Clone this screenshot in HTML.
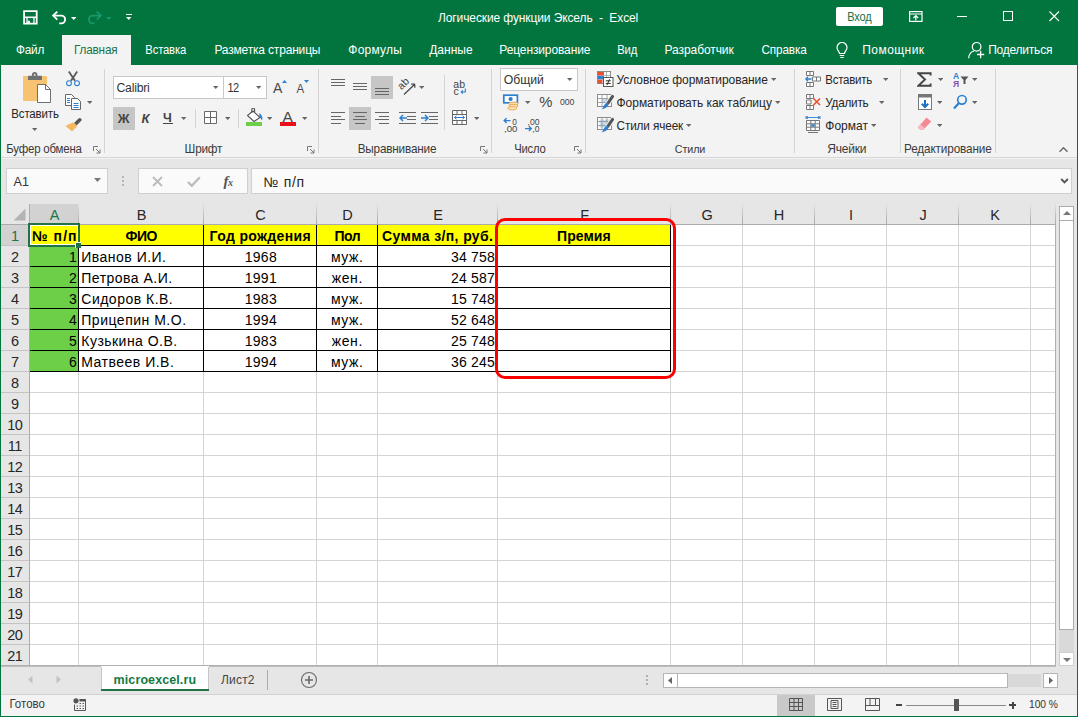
<!DOCTYPE html>
<html><head><meta charset="utf-8">
<style>
*{box-sizing:border-box;margin:0;padding:0}
html,body{width:1078px;height:717px;overflow:hidden;background:#f3f3f3}
body{font-family:"Liberation Sans",sans-serif;font-size:12px;color:#262626;position:relative}
.abs{position:absolute}
.t{position:absolute;white-space:pre;line-height:1}
#title{left:0;top:0;width:1078px;height:65px;background:#02753f}
#ribbon{left:1px;top:65px;width:1076px;height:93px;background:#f3f3f3;border-bottom:1px solid #d6d6d6}
.tab{position:absolute;top:43px;color:#fff;font-size:12.5px;white-space:nowrap;line-height:1}
.gl{position:absolute;top:149px;font-size:11.5px;color:#3b3b3b;white-space:nowrap;line-height:1;transform:translateX(-50%);top:144px}
.sep{position:absolute;top:70px;width:1px;height:84px;background:#d9d9d9}
.rt{position:absolute;font-size:12.5px;color:#262626;white-space:nowrap;line-height:1}
.dd{position:absolute;width:0;height:0;border-left:3px solid transparent;border-right:3px solid transparent;border-top:3px solid #555}
#fbar{left:1px;top:159px;width:1076px;height:45px;background:#e6e6e6}
.box{position:absolute;background:#fff;border:1px solid #dadada}
#grid{left:1px;top:204px;width:1055px;height:462px;background:#fff}
.ch{position:absolute;top:204px;height:20px;background:#e6e6e6;font-size:14.5px;color:#262626;text-align:center;line-height:21px}
.rh{position:absolute;left:1px;width:28px;height:21px;background:#e6e6e6;font-size:14.5px;color:#262626;text-align:center;line-height:22px;border-bottom:1px solid #c9c9c9}
.vl{position:absolute;width:1px;background:#d8d8d8}
.hl{position:absolute;height:1px;background:#d8d8d8}
.c{position:absolute;height:21px;font-size:14.5px;line-height:22px;color:#000;white-space:nowrap;overflow:hidden}
.b{font-weight:bold}
</style></head><body>
<div class="abs" id="title"></div>
<div class="abs" id="ribbon"></div>
<div class="abs" id="fbar"></div>
<div class="abs" id="grid"></div>
<svg class="abs" style="left:22.5px;top:10px" width="15" height="15" viewBox="0 0 15 15"><path d="M1.1 1.1H13.7V13.7H1.1Z" fill="none" stroke="#fff" stroke-width="1.8"/><path d="M1 7.3H13.8" stroke="#fff" stroke-width="1.6"/><path d="M4 13.7V7.3M11 13.7V7.3" stroke="#fff" stroke-width="1.3"/><rect x="4.6" y="10.7" width="2.3" height="3" fill="#fff"/></svg>
<svg class="abs" style="left:51px;top:9px" width="18" height="17" viewBox="0 0 18 17"><path d="M2.2 6.6H10.2A3.9 3.9 0 0 1 10.2 14.4H8.2" fill="none" stroke="#fff" stroke-width="1.9"/><path d="M6.3 2.6L2.2 6.6L6.3 10.6" fill="none" stroke="#fff" stroke-width="1.9"/></svg>
<svg class="abs" style="left:70.80px;top:16.50px" width="5.4" height="3"><path d="M0 0H5.4L2.7 3Z" fill="#fff"/></svg>
<svg class="abs" style="left:85px;top:9px" width="18" height="17" viewBox="0 0 18 17"><path d="M15.8 6.6H7.8A3.9 3.9 0 0 0 7.8 14.4H9.8" fill="none" stroke="#17976a" stroke-width="1.9"/><path d="M11.7 2.6L15.8 6.6L11.7 10.6" fill="none" stroke="#17976a" stroke-width="1.9"/></svg>
<svg class="abs" style="left:105.80px;top:16.50px" width="5.4" height="3"><path d="M0 0H5.4L2.7 3Z" fill="#17976a"/></svg>
<div class="abs" style="left:126px;top:14px;width:6px;height:1px;background:#fff;"></div>
<svg class="abs" style="left:126.30px;top:17.00px" width="5.4" height="3"><path d="M0 0H5.4L2.7 3Z" fill="#fff"/></svg>
<div class="t" style="left:438.00px;top:7.50px;height:20px;line-height:20px;font-size:12px;color:#fff;letter-spacing:-0.109px;transform:scaleY(1.08);">Логические функции Эксель  -  Excel</div>
<div class="abs" style="left:836px;top:7px;width:47px;height:19px;background:#fff;border-radius:2px"></div>
<div class="t" style="left:847.30px;top:6.50px;height:20px;line-height:20px;font-size:11.0px;color:#217346;letter-spacing:-0.167px;transform:scaleY(1.08);">Вход</div>
<svg class="abs" style="left:909px;top:10.5px" width="14" height="11" viewBox="0 0 14 11"><rect x="0.6" y="0.6" width="12.4" height="9.8" fill="none" stroke="#fff" stroke-width="1.2"/><path d="M0.6 3H13" stroke="#fff" stroke-width="1"/><path d="M6.8 9.4V5M4.4 7L6.8 4.6L9.2 7" fill="none" stroke="#fff" stroke-width="1.2"/></svg>
<div class="abs" style="left:957px;top:16px;width:10px;height:1px;background:#fff;"></div>
<div class="abs" style="left:1003px;top:11px;width:10px;height:10px;background:transparent;border:1px solid #fff"></div>
<svg class="abs" style="left:1049px;top:11px" width="11" height="11" viewBox="0 0 11 11"><path d="M0.5 0.5L10 10M10 0.5L0.5 10" stroke="#fff" stroke-width="1.1"/></svg>

<div class="abs" style="left:62px;top:35px;width:69px;height:31px;background:#f3f3f3;"></div>
<div class="t" style="left:16.00px;top:40.00px;height:20px;line-height:20px;font-size:11.75px;color:#fff;letter-spacing:-0.200px;transform:scaleY(1.08);">Файл</div>
<div class="t" style="left:74.10px;top:40.00px;height:20px;line-height:20px;font-size:11.75px;color:#217346;letter-spacing:-0.208px;transform:scaleY(1.08);">Главная</div>
<div class="t" style="left:145.30px;top:40.00px;height:20px;line-height:20px;font-size:11.25px;color:#fff;letter-spacing:-0.150px;transform:scaleY(1.08);">Вставка</div>
<div class="t" style="left:214.40px;top:40.00px;height:20px;line-height:20px;font-size:12px;color:#fff;letter-spacing:-0.175px;transform:scaleY(1.08);">Разметка страницы</div>
<div class="t" style="left:348.30px;top:40.00px;height:20px;line-height:20px;font-size:12px;color:#fff;letter-spacing:0.208px;transform:scaleY(1.08);">Формулы</div>
<div class="t" style="left:429.20px;top:40.00px;height:20px;line-height:20px;font-size:12px;color:#fff;letter-spacing:0.030px;transform:scaleY(1.08);">Данные</div>
<div class="t" style="left:499.30px;top:40.00px;height:20px;line-height:20px;font-size:12px;color:#fff;letter-spacing:-0.119px;transform:scaleY(1.08);">Рецензирование</div>
<div class="t" style="left:617.20px;top:40.00px;height:20px;line-height:20px;font-size:11.25px;color:#fff;letter-spacing:-0.075px;transform:scaleY(1.08);">Вид</div>
<div class="t" style="left:664.60px;top:40.00px;height:20px;line-height:20px;font-size:12px;color:#fff;letter-spacing:-0.085px;transform:scaleY(1.08);">Разработчик</div>
<div class="t" style="left:761.40px;top:40.00px;height:20px;line-height:20px;font-size:11.75px;color:#fff;letter-spacing:-0.125px;transform:scaleY(1.08);">Справка</div>
<div class="t" style="left:862.30px;top:40.00px;height:20px;line-height:20px;font-size:12px;color:#fff;letter-spacing:0.443px;transform:scaleY(1.08);">Помощник</div>
<div class="t" style="left:988.20px;top:40.00px;height:20px;line-height:20px;font-size:12px;color:#fff;letter-spacing:-0.228px;transform:scaleY(1.08);">Поделиться</div>
<svg class="abs" style="left:835px;top:42px" width="14" height="17" viewBox="0 0 14 17"><path d="M4.5 11.5C4.5 9.5 2 8.5 2 5.5A5 5 0 0 1 12 5.5C12 8.5 9.5 9.5 9.5 11.5Z" fill="none" stroke="#fff" stroke-width="1.2"/><path d="M4.8 13.5H9.2M5.3 15.5H8.7" stroke="#fff" stroke-width="1.1"/></svg>
<svg class="abs" style="left:967px;top:41px" width="19" height="18" viewBox="0 0 19 18"><circle cx="9.6" cy="5.8" r="4.3" fill="none" stroke="#fff" stroke-width="1.2"/><path d="M1.6 17.2C2 12.8 4.4 10.6 7 10" fill="none" stroke="#fff" stroke-width="1.2"/><path d="M13.6 9.8V17.2M10 13.5H17.2" stroke="#fff" stroke-width="1.3"/></svg>

<svg class="abs" style="left:22px;top:71px" width="31" height="33" viewBox="0 0 31 33"><rect x="1" y="5" width="24" height="25" rx="1" fill="#f8c370"/><path d="M6 9V5.6A0.8 0.8 0 0 1 6.8 4.8H10V3.6A2.6 2.6 0 0 1 15.4 3.6V4.8H19.2A0.8 0.8 0 0 1 20 5.6V9Z" fill="#707070"/><circle cx="12.7" cy="3.9" r="0.9" fill="#f3f3f3"/><path d="M15.5 13.5H23.5L28.5 18.5V31.5H15.5Z" fill="#fff" stroke="#707070" stroke-width="1"/><path d="M23.5 13.5V18.5H28.5" fill="none" stroke="#707070" stroke-width="1"/></svg>
<div class="t" style="left:11.30px;top:104.00px;height:20px;line-height:20px;font-size:11.5px;color:#262626;letter-spacing:-0.164px;transform:scaleY(1.08);">Вставить</div>
<svg class="abs" style="left:32.30px;top:127.50px" width="5.4" height="3"><path d="M0 0H5.4L2.7 3Z" fill="#666"/></svg>
<svg class="abs" style="left:65px;top:71px" width="16" height="16" viewBox="0 0 16 16"><path d="M3.8 0.5L10 9.8M12.2 0.5L6 9.8" stroke="#585858" stroke-width="1.8" fill="none"/><circle cx="4" cy="12.2" r="2.4" fill="none" stroke="#2f7fcf" stroke-width="1.1"/><circle cx="12" cy="12.2" r="2.4" fill="none" stroke="#2f7fcf" stroke-width="1.1"/></svg>
<svg class="abs" style="left:65px;top:94px" width="17" height="16" viewBox="0 0 17 16"><path d="M0.5 0.5H6.5L9.5 3.5V11.5H0.5Z" fill="#fff" stroke="#666" stroke-width="1"/><path d="M6.5 4.5H12.5L15.5 7.5V15.5H6.5Z" fill="#fff" stroke="#666" stroke-width="1"/><path d="M2 4.5H5M2 6.5H5M2 8.5H5M8.5 9.5H13.5M8.5 11.5H13.5M8.5 13.5H13.5" stroke="#2f7fcf" stroke-width="1"/></svg>
<svg class="abs" style="left:86.70px;top:100.50px" width="5.4" height="3"><path d="M0 0H5.4L2.7 3Z" fill="#666"/></svg>
<svg class="abs" style="left:65px;top:117px" width="17" height="15" viewBox="0 0 17 15"><path d="M9 6L13.5 1.5A1.6 1.6 0 0 1 16 4L11.5 8.5Z" fill="#555"/><path d="M8.2 5.2L12.3 9.3L7 14.5L0.5 9Z" fill="#f4b860"/></svg>
<div class="t" style="left:6.30px;top:139.00px;height:20px;line-height:20px;font-size:11.5px;color:#3a3a3a;letter-spacing:-0.223px;transform:scaleY(1.08);">Буфер обмена</div>
<svg class="abs" style="left:93px;top:146px" width="8" height="8" viewBox="0 0 8 8"><path d="M0.5 5V0.5H5" fill="none" stroke="#777" stroke-width="1"/><path d="M3 3L7 7M7 3.5V7H3.5" fill="none" stroke="#777" stroke-width="1"/></svg>
<div class="abs" style="left:104px;top:69px;width:1px;height:84px;background:#d4d4d4;"></div>
<div class="abs" style="left:113px;top:76px;width:111px;height:23px;background:#fff;border:1px solid #c8c8c8"></div>
<div class="abs" style="left:224px;top:76px;width:43px;height:23px;background:#fff;border:1px solid #c8c8c8;border-left:0"></div>
<div class="t" style="left:116.50px;top:77.50px;height:20px;line-height:20px;font-size:12.25px;color:#333;letter-spacing:-0.242px;transform:scaleY(1.08);">Calibri</div>
<svg class="abs" style="left:213.30px;top:86.00px" width="5.4" height="3"><path d="M0 0H5.4L2.7 3Z" fill="#666"/></svg>
<div class="t" style="left:227.40px;top:77.50px;height:20px;line-height:20px;font-size:11.0px;color:#333;letter-spacing:-0.600px;transform:scaleY(1.08);">12</div>
<svg class="abs" style="left:256.30px;top:86.00px" width="5.4" height="3"><path d="M0 0H5.4L2.7 3Z" fill="#666"/></svg>
<div class="t" style="left:273.00px;top:78.00px;height:20px;line-height:20px;font-size:14px;color:#4a4a4a;letter-spacing:0.000px;">A</div>
<svg class="abs" style="left:282px;top:80px" width="5" height="3" viewBox="0 0 5 3"><path d="M0 3L2.5 0L5 3Z" fill="#2f7fcf"/></svg>
<div class="t" style="left:296.40px;top:79.00px;height:20px;line-height:20px;font-size:11.5px;color:#4a4a4a;letter-spacing:-0.150px;transform:scaleY(1.08);">A</div>
<svg class="abs" style="left:303.5px;top:80px" width="5" height="3" viewBox="0 0 5 3"><path d="M0 0L2.5 3L5 0Z" fill="#2f7fcf"/></svg>
<div class="abs" style="left:113px;top:107px;width:22px;height:23px;background:#c6c6c6;"></div>
<div class="t" style="left:117.75px;top:108.50px;height:20px;line-height:20px;font-size:13px;color:#444;letter-spacing:0.750px;font-weight:bold;">Ж</div>
<div class="t" style="left:141.50px;top:108.50px;height:20px;line-height:20px;font-size:13px;color:#444;letter-spacing:-0.250px;font-weight:bold;font-style:italic;">К</div>
<div class="t" style="left:163.00px;top:107.50px;height:20px;line-height:20px;font-size:12.5px;color:#444;letter-spacing:0.750px;font-weight:bold;transform:scaleY(1.08);">Ч</div>
<div class="abs" style="left:163px;top:123px;width:10px;height:1px;background:#444;"></div>
<svg class="abs" style="left:181.30px;top:117.00px" width="5.4" height="3"><path d="M0 0H5.4L2.7 3Z" fill="#666"/></svg>
<div class="abs" style="left:195px;top:109px;width:1px;height:19px;background:#d4d4d4;"></div>
<svg class="abs" style="left:204px;top:111px" width="13" height="13" viewBox="0 0 13 13"><path d="M0.5 0.5H12.5V12.5H0.5ZM6.5 0.5V12.5M0.5 6.5H12.5" fill="#fff" stroke="#6a6a6a" stroke-width="1"/></svg>
<svg class="abs" style="left:224.70px;top:117.00px" width="5.4" height="3"><path d="M0 0H5.4L2.7 3Z" fill="#666"/></svg>
<div class="abs" style="left:238px;top:109px;width:1px;height:19px;background:#d4d4d4;"></div>
<svg class="abs" style="left:246px;top:108px" width="18" height="15" viewBox="0 0 18 15"><path d="M7 3L14 9.5L8 13.5L1.5 7.5Z" fill="#fff" stroke="#555" stroke-width="1.1"/><path d="M5.8 5V1.6A1.4 1.4 0 0 1 8.6 1.6V4.5" fill="none" stroke="#555" stroke-width="1.1"/><path d="M13.2 5C16 7 17.2 9.5 16 12.5C14.8 10.5 14.2 9.8 13.6 9.5Z" fill="#2f7fcf"/></svg>
<div class="abs" style="left:246px;top:122px;width:16px;height:4px;background:#6dce48;"></div>
<svg class="abs" style="left:267.30px;top:117.00px" width="5.4" height="3"><path d="M0 0H5.4L2.7 3Z" fill="#666"/></svg>
<div class="t" style="left:282.60px;top:106.50px;height:20px;line-height:20px;font-size:15.5px;color:#4a4a4a;letter-spacing:1.200px;">A</div>
<div class="abs" style="left:280px;top:122px;width:16px;height:4px;background:#e8111a;"></div>
<svg class="abs" style="left:301.70px;top:117.00px" width="5.4" height="3"><path d="M0 0H5.4L2.7 3Z" fill="#666"/></svg>
<div class="t" style="left:184.60px;top:139.00px;height:20px;line-height:20px;font-size:11.75px;color:#3a3a3a;letter-spacing:-0.237px;transform:scaleY(1.08);">Шрифт</div>
<svg class="abs" style="left:307px;top:146px" width="8" height="8" viewBox="0 0 8 8"><path d="M0.5 5V0.5H5" fill="none" stroke="#777" stroke-width="1"/><path d="M3 3L7 7M7 3.5V7H3.5" fill="none" stroke="#777" stroke-width="1"/></svg>
<div class="abs" style="left:318px;top:69px;width:1px;height:84px;background:#d4d4d4;"></div>
<div class="abs" style="left:331px;top:79px;width:14px;height:1px;background:#666;"></div>
<div class="abs" style="left:331px;top:82px;width:14px;height:1px;background:#666;"></div>
<div class="abs" style="left:331px;top:85px;width:14px;height:1px;background:#666;"></div>
<div class="abs" style="left:353px;top:83px;width:14px;height:1px;background:#666;"></div>
<div class="abs" style="left:353px;top:86px;width:14px;height:1px;background:#666;"></div>
<div class="abs" style="left:353px;top:89px;width:14px;height:1px;background:#666;"></div>
<div class="abs" style="left:371px;top:76px;width:22px;height:23px;background:#c6c6c6;"></div>
<div class="abs" style="left:375px;top:88px;width:14px;height:1px;background:#666;"></div>
<div class="abs" style="left:375px;top:91px;width:14px;height:1px;background:#666;"></div>
<div class="abs" style="left:375px;top:94px;width:14px;height:1px;background:#666;"></div>
<svg class="abs" style="left:397px;top:76px" width="20" height="20" viewBox="0 0 20 20"><text x="0" y="0" font-family="Liberation Sans" font-size="10.5" fill="#444" transform="translate(4.6 14.2) rotate(-45)">ab</text><path d="M7 18.5L17.5 8.5M17.8 8.2H14.2M17.8 8.2V11.8" fill="none" stroke="#444" stroke-width="1.2"/></svg>
<svg class="abs" style="left:418.90px;top:86.00px" width="5.4" height="3"><path d="M0 0H5.4L2.7 3Z" fill="#666"/></svg>
<div class="abs" style="left:444px;top:75px;width:1px;height:55px;background:#d4d4d4;"></div>
<svg class="abs" style="left:453px;top:78px" width="16" height="18" viewBox="0 0 16 18"><text x="0.3" y="9.6" font-family="Liberation Sans" font-size="10.5" fill="#444">ab</text><text x="0.6" y="17" font-family="Liberation Sans" font-size="10.5" fill="#444">c</text><path d="M12.3 10.5V14H8.3M9.8 12.4L8.2 14L9.8 15.6" fill="none" stroke="#2f7fcf" stroke-width="1.1"/></svg>
<div class="abs" style="left:331px;top:112.0px;width:14px;height:1px;background:#666;"></div>
<div class="abs" style="left:331px;top:115.5px;width:10px;height:1px;background:#666;"></div>
<div class="abs" style="left:331px;top:119.0px;width:14px;height:1px;background:#666;"></div>
<div class="abs" style="left:331px;top:122.5px;width:10px;height:1px;background:#666;"></div>
<div class="abs" style="left:349px;top:107px;width:22px;height:23px;background:#c6c6c6;"></div>
<div class="abs" style="left:353.0px;top:112.0px;width:14px;height:1px;background:#666;"></div>
<div class="abs" style="left:355.0px;top:115.5px;width:10px;height:1px;background:#666;"></div>
<div class="abs" style="left:353.0px;top:119.0px;width:14px;height:1px;background:#666;"></div>
<div class="abs" style="left:355.0px;top:122.5px;width:10px;height:1px;background:#666;"></div>
<div class="abs" style="left:375px;top:112.0px;width:14px;height:1px;background:#666;"></div>
<div class="abs" style="left:379px;top:115.5px;width:10px;height:1px;background:#666;"></div>
<div class="abs" style="left:375px;top:119.0px;width:14px;height:1px;background:#666;"></div>
<div class="abs" style="left:379px;top:122.5px;width:10px;height:1px;background:#666;"></div>
<div class="abs" style="left:399px;top:112px;width:17px;height:1px;background:#666;"></div>
<div class="abs" style="left:399px;top:122.5px;width:17px;height:1px;background:#666;"></div>
<div class="abs" style="left:407px;top:115.5px;width:9px;height:1px;background:#666;"></div>
<div class="abs" style="left:407px;top:119.0px;width:9px;height:1px;background:#666;"></div>
<svg class="abs" style="left:399px;top:114px" width="8" height="8" viewBox="0 0 8 8"><path d="M8 4H1M4 1L1 4L4 7" fill="none" stroke="#2f7fcf" stroke-width="1.5"/></svg>
<div class="abs" style="left:421px;top:112px;width:17px;height:1px;background:#666;"></div>
<div class="abs" style="left:421px;top:122.5px;width:17px;height:1px;background:#666;"></div>
<div class="abs" style="left:429px;top:115.5px;width:9px;height:1px;background:#666;"></div>
<div class="abs" style="left:429px;top:119.0px;width:9px;height:1px;background:#666;"></div>
<svg class="abs" style="left:421px;top:114px" width="8" height="8" viewBox="0 0 8 8"><path d="M0 4H7M4 1L7 4L4 7" fill="none" stroke="#2f7fcf" stroke-width="1.5"/></svg>
<svg class="abs" style="left:452px;top:110px" width="15" height="15" viewBox="0 0 15 15"><path d="M0.5 0.5H14.5V14.5H0.5Z" fill="#fff" stroke="#666" stroke-width="1"/><path d="M0.5 4.5H14.5M0.5 10.5H14.5M5 0.5V4.5M10 0.5V4.5M5 10.5V14.5M10 10.5V14.5" stroke="#666" stroke-width="1" fill="none"/><path d="M2.5 7.5H12.5M4.5 5.8L2.5 7.5L4.5 9.2M10.5 5.8L12.5 7.5L10.5 9.2" stroke="#2f7fcf" stroke-width="1" fill="none"/></svg>
<svg class="abs" style="left:474.00px;top:117.00px" width="5.4" height="3"><path d="M0 0H5.4L2.7 3Z" fill="#666"/></svg>
<div class="t" style="left:357.70px;top:139.00px;height:20px;line-height:20px;font-size:11.75px;color:#3a3a3a;letter-spacing:-0.191px;transform:scaleY(1.08);">Выравнивание</div>
<svg class="abs" style="left:480px;top:146px" width="8" height="8" viewBox="0 0 8 8"><path d="M0.5 5V0.5H5" fill="none" stroke="#777" stroke-width="1"/><path d="M3 3L7 7M7 3.5V7H3.5" fill="none" stroke="#777" stroke-width="1"/></svg>
<div class="abs" style="left:491px;top:69px;width:1px;height:84px;background:#d4d4d4;"></div>
<div class="abs" style="left:500px;top:68px;width:78px;height:23px;background:#fff;border:1px solid #c8c8c8"></div>
<div class="t" style="left:503.80px;top:69.50px;height:20px;line-height:20px;font-size:12.25px;color:#333;letter-spacing:-0.038px;transform:scaleY(1.08);">Общий</div>
<svg class="abs" style="left:567.30px;top:78.00px" width="5.4" height="3"><path d="M0 0H5.4L2.7 3Z" fill="#666"/></svg>
<svg class="abs" style="left:502px;top:93px" width="18" height="18" viewBox="0 0 18 18"><rect x="1.8" y="2.2" width="13.6" height="7.6" fill="#fff" stroke="#2f7fcf" stroke-width="1.7"/><circle cx="8.6" cy="6" r="2.1" fill="#2f7fcf"/><ellipse cx="11.5" cy="10.8" rx="4.6" ry="1.7" fill="#fbe3bd" stroke="#f2aa4c" stroke-width="1"/><ellipse cx="11.5" cy="13" rx="4.6" ry="1.7" fill="#fbe3bd" stroke="#f2aa4c" stroke-width="1"/><ellipse cx="10.2" cy="15.2" rx="4.6" ry="1.7" fill="#fbe3bd" stroke="#f2aa4c" stroke-width="1"/></svg>
<svg class="abs" style="left:524.90px;top:100.50px" width="5.4" height="3"><path d="M0 0H5.4L2.7 3Z" fill="#666"/></svg>
<div class="t" style="left:539.20px;top:92.00px;height:20px;line-height:20px;font-size:14.75px;color:#444;letter-spacing:-0.200px;">%</div>
<div class="t" style="left:560.00px;top:91.50px;height:20px;line-height:20px;font-size:8.75px;color:#444;letter-spacing:-0.150px;transform:scaleY(1.08);">000</div>
<svg class="abs" style="left:503px;top:117px" width="16" height="16" viewBox="0 0 16 16"><path d="M7.5 3.6H1.2M3.6 1.2L1.2 3.6L3.6 6" fill="none" stroke="#2f7fcf" stroke-width="1.4"/><text x="9.3" y="7.6" textLength="4.6" font-family="Liberation Sans" font-size="9.6" fill="#444" lengthAdjust="spacingAndGlyphs">0</text><text x="1" y="15" textLength="13.4" font-family="Liberation Sans" font-size="9.6" fill="#444" lengthAdjust="spacingAndGlyphs">,00</text></svg>
<svg class="abs" style="left:524px;top:117px" width="16" height="16" viewBox="0 0 16 16"><text x="3.5" y="7.6" textLength="12" font-family="Liberation Sans" font-size="9.6" fill="#444" lengthAdjust="spacingAndGlyphs">,00</text><path d="M1 11.6H7.3M4.9 9.2L7.3 11.6L4.9 14" fill="none" stroke="#2f7fcf" stroke-width="1.4"/><text x="8.3" y="15" textLength="7.2" font-family="Liberation Sans" font-size="9.6" fill="#444" lengthAdjust="spacingAndGlyphs">,0</text></svg>
<div class="t" style="left:514.30px;top:139.00px;height:20px;line-height:20px;font-size:11.25px;color:#3a3a3a;letter-spacing:-0.237px;transform:scaleY(1.08);">Число</div>
<svg class="abs" style="left:574px;top:146px" width="8" height="8" viewBox="0 0 8 8"><path d="M0.5 5V0.5H5" fill="none" stroke="#777" stroke-width="1"/><path d="M3 3L7 7M7 3.5V7H3.5" fill="none" stroke="#777" stroke-width="1"/></svg>
<div class="abs" style="left:585px;top:69px;width:1px;height:84px;background:#d4d4d4;"></div>
<svg class="abs" style="left:597px;top:71px" width="17" height="17" viewBox="0 0 17 17"><rect x="0.5" y="0.5" width="13" height="12" fill="#fff" stroke="#8a8a8a"/><rect x="1" y="1" width="6" height="3.6" fill="#e8502f"/><rect x="1" y="4.8" width="6" height="3.6" fill="#2f7fcf"/><rect x="1" y="8.6" width="4.5" height="3.6" fill="#e8502f"/><path d="M9.5 0.5V6M7 4.5H13.5" stroke="#aaa" stroke-width="0.9"/><rect x="6.5" y="6.5" width="9.5" height="9" fill="#fff" stroke="#555"/><path d="M8.8 9.8H13.8M8.8 12.4H13.8M12.6 8.2L10 14" stroke="#333" stroke-width="1"/></svg>
<div class="t" style="left:616.50px;top:70.00px;height:20px;line-height:20px;font-size:12px;color:#262626;letter-spacing:-0.057px;transform:scaleY(1.08);">Условное форматирование</div>
<svg class="abs" style="left:770.90px;top:78.20px" width="5.4" height="3"><path d="M0 0H5.4L2.7 3Z" fill="#666"/></svg>
<svg class="abs" style="left:597px;top:94px" width="18" height="17" viewBox="0 0 18 17"><rect x="0.5" y="0.5" width="14" height="12" fill="#fff" stroke="#8a8a8a"/><rect x="5" y="4.5" width="5.5" height="4" fill="#c3dbf1"/><path d="M0.5 4.5H14.5M0.5 8.5H14.5M5 0.5V12.5M10 0.5V12.5" stroke="#9a9a9a" stroke-width="0.9"/><path d="M15.6 2.4L11 9.2" stroke="#f3f3f3" stroke-width="5" stroke-linecap="round"/><path d="M15.6 2.4L11 9.2" stroke="#555" stroke-width="3" stroke-linecap="round"/><path d="M10.3 8.6C12.6 10 11.6 14.2 4.2 15.6C7 13.6 6.4 10 10.3 8.6Z" fill="#2f7fcf"/></svg>
<div class="t" style="left:616.50px;top:93.00px;height:20px;line-height:20px;font-size:12px;color:#262626;letter-spacing:-0.031px;transform:scaleY(1.08);">Форматировать как таблицу</div>
<svg class="abs" style="left:774.90px;top:101.20px" width="5.4" height="3"><path d="M0 0H5.4L2.7 3Z" fill="#666"/></svg>
<svg class="abs" style="left:597px;top:117px" width="18" height="17" viewBox="0 0 18 17"><rect x="0.5" y="0.5" width="14" height="12" fill="#fff" stroke="#8a8a8a"/><rect x="2.5" y="2.5" width="10" height="8" fill="#c3dbf1"/><path d="M0.5 4.5H14.5M0.5 8.5H14.5M5 0.5V12.5M10 0.5V12.5" stroke="#9a9a9a" stroke-width="0.9"/><path d="M15.6 2.4L11 9.2" stroke="#f3f3f3" stroke-width="5" stroke-linecap="round"/><path d="M15.6 2.4L11 9.2" stroke="#555" stroke-width="3" stroke-linecap="round"/><path d="M10.3 8.6C12.6 10 11.6 14.2 4.2 15.6C7 13.6 6.4 10 10.3 8.6Z" fill="#2f7fcf"/></svg>
<div class="t" style="left:616.50px;top:116.00px;height:20px;line-height:20px;font-size:11.75px;color:#262626;letter-spacing:-0.110px;transform:scaleY(1.08);">Стили ячеек</div>
<svg class="abs" style="left:686.30px;top:124.10px" width="5.4" height="3"><path d="M0 0H5.4L2.7 3Z" fill="#666"/></svg>
<div class="t" style="left:674.80px;top:139.00px;height:20px;line-height:20px;font-size:10.75px;color:#3a3a3a;letter-spacing:-0.100px;transform:scaleY(1.08);">Стили</div>
<div class="abs" style="left:794px;top:69px;width:1px;height:84px;background:#d4d4d4;"></div>
<svg class="abs" style="left:805px;top:71px" width="17" height="17" viewBox="0 0 17 17"><path d="M1.5 0.5H8.5V4.5H1.5ZM1.5 11.5H8.5V15.5H1.5ZM5 0.5V4.5M5 11.5V15.5" fill="#fff" stroke="#777"/><path d="M7.5 6H15.5V10H7.5ZM11.5 6V10" fill="#fff" stroke="#777"/><path d="M6.5 8H0.8M3 5.7L0.8 8L3 10.3" fill="none" stroke="#2f7fcf" stroke-width="1.3"/></svg>
<div class="t" style="left:825.30px;top:70.00px;height:20px;line-height:20px;font-size:11.5px;color:#262626;letter-spacing:-0.250px;transform:scaleY(1.08);">Вставить</div>
<svg class="abs" style="left:882.50px;top:78.20px" width="5.4" height="3"><path d="M0 0H5.4L2.7 3Z" fill="#666"/></svg>
<svg class="abs" style="left:805px;top:94px" width="17" height="17" viewBox="0 0 17 17"><path d="M1.5 0.5H8.5V4.5H1.5ZM1.5 11.5H8.5V15.5H1.5ZM5 0.5V4.5M5 11.5V15.5M1.5 6H6V10H1.5Z" fill="#fff" stroke="#777"/><path d="M8.5 4.5L15 11M15 4.5L8.5 11" fill="none" stroke="#e8502f" stroke-width="1.6"/></svg>
<div class="t" style="left:825.30px;top:93.00px;height:20px;line-height:20px;font-size:11.75px;color:#262626;letter-spacing:-0.242px;transform:scaleY(1.08);">Удалить</div>
<svg class="abs" style="left:879.00px;top:101.20px" width="5.4" height="3"><path d="M0 0H5.4L2.7 3Z" fill="#666"/></svg>
<svg class="abs" style="left:805px;top:116px" width="17" height="17" viewBox="0 0 17 17"><path d="M1 1.5H15M1 0V3M15 0V3M3 0.3L1 1.5L3 2.7M13 0.3L15 1.5L13 2.7" fill="none" stroke="#2f7fcf" stroke-width="0.9"/><path d="M1.5 4.5H14.5V14.5H1.5ZM1.5 7.8H14.5M1.5 11.2H14.5M5.8 4.5V14.5M10.2 4.5V14.5" fill="#fff" stroke="#777"/><rect x="6.3" y="8.3" width="3.4" height="2.4" fill="#2f7fcf"/><path d="M3 16.5H13" stroke="#777"/></svg>
<div class="t" style="left:825.30px;top:116.00px;height:20px;line-height:20px;font-size:12px;color:#262626;letter-spacing:-0.010px;transform:scaleY(1.08);">Формат</div>
<svg class="abs" style="left:870.60px;top:124.10px" width="5.4" height="3"><path d="M0 0H5.4L2.7 3Z" fill="#666"/></svg>
<div class="t" style="left:827.20px;top:139.00px;height:20px;line-height:20px;font-size:12px;color:#3a3a3a;letter-spacing:-0.210px;transform:scaleY(1.08);">Ячейки</div>
<div class="abs" style="left:900px;top:69px;width:1px;height:84px;background:#d4d4d4;"></div>
<svg class="abs" style="left:917px;top:72px" width="15" height="15" viewBox="0 0 15 15"><path d="M13.6 3.6V1.2H1.4L8 7.5L1.4 13.8H13.6V11.4" fill="none" stroke="#444" stroke-width="1.9"/></svg>
<svg class="abs" style="left:938.00px;top:78.20px" width="5.4" height="3"><path d="M0 0H5.4L2.7 3Z" fill="#666"/></svg>
<svg class="abs" style="left:953px;top:71px" width="16" height="17" viewBox="0 0 16 17"><text x="0" y="7.5" font-family="Liberation Sans" font-size="8.5" font-weight="bold" fill="#2f7fcf">А</text><text x="0" y="16" font-family="Liberation Sans" font-size="8.5" font-weight="bold" fill="#8a4fa8">Я</text><path d="M7.5 5.5H15.5L12.5 9V13H10.5V9Z" fill="#555"/></svg>
<svg class="abs" style="left:971.90px;top:78.20px" width="5.4" height="3"><path d="M0 0H5.4L2.7 3Z" fill="#666"/></svg>
<svg class="abs" style="left:917.5px;top:94px" width="14" height="16" viewBox="0 0 14 16"><rect x="0.5" y="0.5" width="13" height="15" fill="#fff" stroke="#777"/><rect x="0.5" y="0.5" width="13" height="3" fill="#777"/><path d="M7 6V13M3.8 9.8L7 13L10.2 9.8" fill="none" stroke="#1f6fc0" stroke-width="2"/></svg>
<svg class="abs" style="left:937.00px;top:101.20px" width="5.4" height="3"><path d="M0 0H5.4L2.7 3Z" fill="#666"/></svg>
<svg class="abs" style="left:953px;top:94px" width="15" height="16" viewBox="0 0 15 16"><circle cx="9" cy="5.8" r="4.3" fill="none" stroke="#2f7fcf" stroke-width="1.7"/><path d="M6 9L1 14.5" stroke="#2f7fcf" stroke-width="2.2"/></svg>
<svg class="abs" style="left:971.90px;top:101.20px" width="5.4" height="3"><path d="M0 0H5.4L2.7 3Z" fill="#666"/></svg>
<svg class="abs" style="left:917px;top:117px" width="15" height="14" viewBox="0 0 15 14"><path d="M9.5 0.6L14.2 4.6L6.2 13H3.4L0.8 10.6Z" fill="#f48a96"/><path d="M3.6 7.4L7.9 11.2L6.2 13H3.4L0.8 10.6Z" fill="#f8b9c0"/></svg>
<svg class="abs" style="left:937.00px;top:124.10px" width="5.4" height="3"><path d="M0 0H5.4L2.7 3Z" fill="#666"/></svg>
<div class="t" style="left:904.00px;top:139.00px;height:20px;line-height:20px;font-size:11.75px;color:#3a3a3a;letter-spacing:-0.131px;transform:scaleY(1.08);">Редактирование</div>
<div class="abs" style="left:995px;top:69px;width:1px;height:84px;background:#d4d4d4;"></div>
<svg class="abs" style="left:1057.5px;top:146px" width="11" height="7" viewBox="0 0 11 7"><path d="M1.5 5.8L5.5 1.8L9.5 5.8" fill="none" stroke="#666" stroke-width="1.4"/></svg>

<div class="abs" style="left:6px;top:168px;width:102px;height:26px;background:#fafafa;border:1px solid #d0d0d0"></div>
<div class="t" style="left:13.40px;top:171.50px;height:20px;line-height:20px;font-size:12.5px;color:#333;letter-spacing:0.350px;transform:scaleY(1.08);">A1</div>
<svg class="abs" style="left:94.00px;top:178.20px" width="7" height="4"><path d="M0 0H7L3.5 4Z" fill="#777"/></svg>
<div class="abs" style="left:122px;top:176px;width:2px;height:2px;background:#b5b5b5;"></div>
<div class="abs" style="left:122px;top:180px;width:2px;height:2px;background:#b5b5b5;"></div>
<div class="abs" style="left:122px;top:184px;width:2px;height:2px;background:#b5b5b5;"></div>
<div class="abs" style="left:138px;top:168px;width:110px;height:26px;background:#fafafa;border:1px solid #d0d0d0"></div>
<svg class="abs" style="left:152px;top:175.5px" width="11" height="11" viewBox="0 0 11 11"><path d="M1 1L10 10M10 1L1 10" stroke="#bcbcbc" stroke-width="1.9"/></svg>
<svg class="abs" style="left:187px;top:175.5px" width="14" height="11" viewBox="0 0 14 11"><path d="M1 6L4.8 9.8L12.8 1.2" fill="none" stroke="#bcbcbc" stroke-width="2.3"/></svg>
<div class="t" style="left:223.5px;top:172px;font-family:'Liberation Serif',serif;font-style:italic;font-weight:bold;font-size:15px;color:#555;height:18px;line-height:18px;letter-spacing:-0.5px">f<span style="font-size:10px">x</span></div>
<div class="abs" style="left:251px;top:168px;width:821px;height:26px;background:#fafafa;border:1px solid #d0d0d0"></div>
<div class="t" style="left:263.50px;top:171.50px;height:20px;line-height:20px;font-size:14px;color:#262626;letter-spacing:0.675px;">№ п/п</div>
<svg class="abs" style="left:1059.5px;top:178px" width="9" height="6" viewBox="0 0 9 6"><path d="M1.2 1L4.5 4.3L7.8 1" fill="none" stroke="#555" stroke-width="1.9"/></svg>

<div class="abs" style="left:1px;top:204px;width:1055px;height:20px;background:#e6e6e6;"></div>
<div class="abs" style="left:30px;top:204px;width:48px;height:20px;background:#d2d2d2;"></div>
<div class="t" style="left:49.76px;top:204.50px;height:20px;line-height:20px;font-size:14.5px;color:#217346;letter-spacing:-0.600px;">A</div>
<div class="vl" style="left:78px;top:204px;height:20px;background:linear-gradient(#e0e0e0,#a8a8a8)"></div>
<div class="t" style="left:136.76px;top:204.50px;height:20px;line-height:20px;font-size:14.5px;color:#262626;letter-spacing:-0.600px;">B</div>
<div class="vl" style="left:203px;top:204px;height:20px;background:linear-gradient(#e0e0e0,#a8a8a8)"></div>
<div class="t" style="left:255.36px;top:204.50px;height:20px;line-height:20px;font-size:14.5px;color:#262626;letter-spacing:-0.600px;">C</div>
<div class="vl" style="left:316px;top:204px;height:20px;background:linear-gradient(#e0e0e0,#a8a8a8)"></div>
<div class="t" style="left:342.36px;top:204.50px;height:20px;line-height:20px;font-size:14.5px;color:#262626;letter-spacing:-0.600px;">D</div>
<div class="vl" style="left:377px;top:204px;height:20px;background:linear-gradient(#e0e0e0,#a8a8a8)"></div>
<div class="t" style="left:433.26px;top:204.50px;height:20px;line-height:20px;font-size:14.5px;color:#262626;letter-spacing:-0.600px;">E</div>
<div class="vl" style="left:497px;top:204px;height:20px;background:linear-gradient(#e0e0e0,#a8a8a8)"></div>
<div class="t" style="left:580.17px;top:204.50px;height:20px;line-height:20px;font-size:14.5px;color:#262626;letter-spacing:-0.600px;">F</div>
<div class="vl" style="left:670px;top:204px;height:20px;background:linear-gradient(#e0e0e0,#a8a8a8)"></div>
<div class="t" style="left:701.46px;top:204.50px;height:20px;line-height:20px;font-size:14.5px;color:#262626;letter-spacing:-0.600px;">G</div>
<div class="vl" style="left:742px;top:204px;height:20px;background:linear-gradient(#e0e0e0,#a8a8a8)"></div>
<div class="t" style="left:773.86px;top:204.50px;height:20px;line-height:20px;font-size:14.5px;color:#262626;letter-spacing:-0.600px;">H</div>
<div class="vl" style="left:814px;top:204px;height:20px;background:linear-gradient(#e0e0e0,#a8a8a8)"></div>
<div class="t" style="left:849.09px;top:204.50px;height:20px;line-height:20px;font-size:14.5px;color:#262626;letter-spacing:-0.600px;">I</div>
<div class="vl" style="left:886px;top:204px;height:20px;background:linear-gradient(#e0e0e0,#a8a8a8)"></div>
<div class="t" style="left:919.48px;top:204.50px;height:20px;line-height:20px;font-size:14.5px;color:#262626;letter-spacing:-0.600px;">J</div>
<div class="vl" style="left:958px;top:204px;height:20px;background:linear-gradient(#e0e0e0,#a8a8a8)"></div>
<div class="t" style="left:990.26px;top:204.50px;height:20px;line-height:20px;font-size:14.5px;color:#262626;letter-spacing:-0.600px;">K</div>
<div class="vl" style="left:1030px;top:204px;height:20px;background:linear-gradient(#e0e0e0,#a8a8a8)"></div>
<div class="vl" style="left:1055px;top:204px;height:20px;background:linear-gradient(#e0e0e0,#a8a8a8)"></div>
<svg class="abs" style="left:13px;top:208px" width="13" height="13" viewBox="0 0 13 13"><path d="M12.5 0.5V12.5H0.5Z" fill="#b4b4b4"/></svg>
<div class="abs" style="left:29px;top:204px;width:1px;height:20px;background:#ababab;"></div>
<div class="abs" style="left:1px;top:224px;width:1055px;height:1px;background:#ababab;"></div>
<div class="abs" style="left:1px;top:225px;width:28px;height:441px;background:#e6e6e6;"></div>
<div class="abs" style="left:29px;top:225px;width:1px;height:441px;background:#ababab;"></div>
<div class="abs" style="left:1px;top:225px;width:28px;height:20px;background:#d2d2d2;"></div>
<div class="t" style="left:10.97px;top:226.00px;height:20px;line-height:20px;font-size:14.5px;color:#217346;letter-spacing:-0.600px;">1</div>
<div class="abs" style="left:1px;top:245px;width:28px;height:1px;background:#c4c4c4;"></div>
<div class="t" style="left:10.97px;top:247.00px;height:20px;line-height:20px;font-size:14.5px;color:#262626;letter-spacing:-0.600px;">2</div>
<div class="abs" style="left:1px;top:266px;width:28px;height:1px;background:#c4c4c4;"></div>
<div class="t" style="left:10.97px;top:268.00px;height:20px;line-height:20px;font-size:14.5px;color:#262626;letter-spacing:-0.600px;">3</div>
<div class="abs" style="left:1px;top:287px;width:28px;height:1px;background:#c4c4c4;"></div>
<div class="t" style="left:10.97px;top:289.00px;height:20px;line-height:20px;font-size:14.5px;color:#262626;letter-spacing:-0.600px;">4</div>
<div class="abs" style="left:1px;top:308px;width:28px;height:1px;background:#c4c4c4;"></div>
<div class="t" style="left:10.97px;top:310.00px;height:20px;line-height:20px;font-size:14.5px;color:#262626;letter-spacing:-0.600px;">5</div>
<div class="abs" style="left:1px;top:329px;width:28px;height:1px;background:#c4c4c4;"></div>
<div class="t" style="left:10.97px;top:331.00px;height:20px;line-height:20px;font-size:14.5px;color:#262626;letter-spacing:-0.600px;">6</div>
<div class="abs" style="left:1px;top:350px;width:28px;height:1px;background:#c4c4c4;"></div>
<div class="t" style="left:10.97px;top:352.00px;height:20px;line-height:20px;font-size:14.5px;color:#262626;letter-spacing:-0.600px;">7</div>
<div class="abs" style="left:1px;top:371px;width:28px;height:1px;background:#c4c4c4;"></div>
<div class="t" style="left:10.97px;top:373.00px;height:20px;line-height:20px;font-size:14.5px;color:#262626;letter-spacing:-0.600px;">8</div>
<div class="abs" style="left:1px;top:392px;width:28px;height:1px;background:#c4c4c4;"></div>
<div class="t" style="left:10.97px;top:394.00px;height:20px;line-height:20px;font-size:14.5px;color:#262626;letter-spacing:-0.600px;">9</div>
<div class="abs" style="left:1px;top:413px;width:28px;height:1px;background:#c4c4c4;"></div>
<div class="t" style="left:7.24px;top:415.00px;height:20px;line-height:20px;font-size:14.5px;color:#262626;letter-spacing:-0.600px;">10</div>
<div class="abs" style="left:1px;top:434px;width:28px;height:1px;background:#c4c4c4;"></div>
<div class="t" style="left:7.77px;top:436.00px;height:20px;line-height:20px;font-size:14.5px;color:#262626;letter-spacing:-0.600px;">11</div>
<div class="abs" style="left:1px;top:455px;width:28px;height:1px;background:#c4c4c4;"></div>
<div class="t" style="left:7.24px;top:457.00px;height:20px;line-height:20px;font-size:14.5px;color:#262626;letter-spacing:-0.600px;">12</div>
<div class="abs" style="left:1px;top:476px;width:28px;height:1px;background:#c4c4c4;"></div>
<div class="t" style="left:7.24px;top:478.00px;height:20px;line-height:20px;font-size:14.5px;color:#262626;letter-spacing:-0.600px;">13</div>
<div class="abs" style="left:1px;top:497px;width:28px;height:1px;background:#c4c4c4;"></div>
<div class="t" style="left:7.24px;top:499.00px;height:20px;line-height:20px;font-size:14.5px;color:#262626;letter-spacing:-0.600px;">14</div>
<div class="abs" style="left:1px;top:518px;width:28px;height:1px;background:#c4c4c4;"></div>
<div class="t" style="left:7.24px;top:520.00px;height:20px;line-height:20px;font-size:14.5px;color:#262626;letter-spacing:-0.600px;">15</div>
<div class="abs" style="left:1px;top:539px;width:28px;height:1px;background:#c4c4c4;"></div>
<div class="t" style="left:7.24px;top:541.00px;height:20px;line-height:20px;font-size:14.5px;color:#262626;letter-spacing:-0.600px;">16</div>
<div class="abs" style="left:1px;top:560px;width:28px;height:1px;background:#c4c4c4;"></div>
<div class="t" style="left:7.24px;top:562.00px;height:20px;line-height:20px;font-size:14.5px;color:#262626;letter-spacing:-0.600px;">17</div>
<div class="abs" style="left:1px;top:581px;width:28px;height:1px;background:#c4c4c4;"></div>
<div class="t" style="left:7.24px;top:583.00px;height:20px;line-height:20px;font-size:14.5px;color:#262626;letter-spacing:-0.600px;">18</div>
<div class="abs" style="left:1px;top:602px;width:28px;height:1px;background:#c4c4c4;"></div>
<div class="t" style="left:7.24px;top:604.00px;height:20px;line-height:20px;font-size:14.5px;color:#262626;letter-spacing:-0.600px;">19</div>
<div class="abs" style="left:1px;top:623px;width:28px;height:1px;background:#c4c4c4;"></div>
<div class="t" style="left:7.24px;top:625.00px;height:20px;line-height:20px;font-size:14.5px;color:#262626;letter-spacing:-0.600px;">20</div>
<div class="abs" style="left:1px;top:644px;width:28px;height:1px;background:#c4c4c4;"></div>
<div class="t" style="left:7.24px;top:646.00px;height:20px;line-height:20px;font-size:14.5px;color:#262626;letter-spacing:-0.600px;">21</div>
<div class="abs" style="left:1px;top:665px;width:28px;height:1px;background:#c4c4c4;"></div>
<div class="abs" style="left:30px;top:245px;width:1025px;height:1px;background:#d4d4d4;"></div>
<div class="abs" style="left:30px;top:266px;width:1025px;height:1px;background:#d4d4d4;"></div>
<div class="abs" style="left:30px;top:287px;width:1025px;height:1px;background:#d4d4d4;"></div>
<div class="abs" style="left:30px;top:308px;width:1025px;height:1px;background:#d4d4d4;"></div>
<div class="abs" style="left:30px;top:329px;width:1025px;height:1px;background:#d4d4d4;"></div>
<div class="abs" style="left:30px;top:350px;width:1025px;height:1px;background:#d4d4d4;"></div>
<div class="abs" style="left:30px;top:371px;width:1025px;height:1px;background:#d4d4d4;"></div>
<div class="abs" style="left:30px;top:392px;width:1025px;height:1px;background:#d4d4d4;"></div>
<div class="abs" style="left:30px;top:413px;width:1025px;height:1px;background:#d4d4d4;"></div>
<div class="abs" style="left:30px;top:434px;width:1025px;height:1px;background:#d4d4d4;"></div>
<div class="abs" style="left:30px;top:455px;width:1025px;height:1px;background:#d4d4d4;"></div>
<div class="abs" style="left:30px;top:476px;width:1025px;height:1px;background:#d4d4d4;"></div>
<div class="abs" style="left:30px;top:497px;width:1025px;height:1px;background:#d4d4d4;"></div>
<div class="abs" style="left:30px;top:518px;width:1025px;height:1px;background:#d4d4d4;"></div>
<div class="abs" style="left:30px;top:539px;width:1025px;height:1px;background:#d4d4d4;"></div>
<div class="abs" style="left:30px;top:560px;width:1025px;height:1px;background:#d4d4d4;"></div>
<div class="abs" style="left:30px;top:581px;width:1025px;height:1px;background:#d4d4d4;"></div>
<div class="abs" style="left:30px;top:602px;width:1025px;height:1px;background:#d4d4d4;"></div>
<div class="abs" style="left:30px;top:623px;width:1025px;height:1px;background:#d4d4d4;"></div>
<div class="abs" style="left:30px;top:644px;width:1025px;height:1px;background:#d4d4d4;"></div>
<div class="abs" style="left:30px;top:665px;width:1025px;height:1px;background:#d4d4d4;"></div>
<div class="abs" style="left:78px;top:225px;width:1px;height:441px;background:#d4d4d4;"></div>
<div class="abs" style="left:203px;top:225px;width:1px;height:441px;background:#d4d4d4;"></div>
<div class="abs" style="left:316px;top:225px;width:1px;height:441px;background:#d4d4d4;"></div>
<div class="abs" style="left:377px;top:225px;width:1px;height:441px;background:#d4d4d4;"></div>
<div class="abs" style="left:497px;top:225px;width:1px;height:441px;background:#d4d4d4;"></div>
<div class="abs" style="left:670px;top:225px;width:1px;height:441px;background:#d4d4d4;"></div>
<div class="abs" style="left:742px;top:225px;width:1px;height:441px;background:#d4d4d4;"></div>
<div class="abs" style="left:814px;top:225px;width:1px;height:441px;background:#d4d4d4;"></div>
<div class="abs" style="left:886px;top:225px;width:1px;height:441px;background:#d4d4d4;"></div>
<div class="abs" style="left:958px;top:225px;width:1px;height:441px;background:#d4d4d4;"></div>
<div class="abs" style="left:1030px;top:225px;width:1px;height:441px;background:#d4d4d4;"></div>
<div class="abs" style="left:1055px;top:224px;width:1px;height:442px;background:#b0b0b0;"></div>
<div class="abs" style="left:1px;top:665px;width:1055px;height:1px;background:#b0b0b0;"></div>
<div class="abs" style="left:30px;top:225px;width:640px;height:20px;background:#ffff00;"></div>
<div class="abs" style="left:30px;top:246px;width:48px;height:125px;background:#6dce48;"></div>
<div class="abs" style="left:30px;top:245px;width:641px;height:1px;background:#000;"></div>
<div class="abs" style="left:30px;top:266px;width:641px;height:1px;background:#000;"></div>
<div class="abs" style="left:30px;top:287px;width:641px;height:1px;background:#000;"></div>
<div class="abs" style="left:30px;top:308px;width:641px;height:1px;background:#000;"></div>
<div class="abs" style="left:30px;top:329px;width:641px;height:1px;background:#000;"></div>
<div class="abs" style="left:30px;top:350px;width:641px;height:1px;background:#000;"></div>
<div class="abs" style="left:30px;top:371px;width:641px;height:1px;background:#000;"></div>
<div class="abs" style="left:78px;top:225px;width:1px;height:147px;background:#000;"></div>
<div class="abs" style="left:203px;top:225px;width:1px;height:147px;background:#000;"></div>
<div class="abs" style="left:316px;top:225px;width:1px;height:147px;background:#000;"></div>
<div class="abs" style="left:377px;top:225px;width:1px;height:147px;background:#000;"></div>
<div class="abs" style="left:497px;top:225px;width:1px;height:147px;background:#000;"></div>
<div class="abs" style="left:670px;top:225px;width:1px;height:147px;background:#000;"></div>
<div class="t" style="left:32.00px;top:226.00px;height:20px;line-height:20px;font-size:14px;color:#000;letter-spacing:1.062px;font-weight:bold;">№ п/п</div>
<div class="t" style="left:125.50px;top:226.00px;height:20px;line-height:20px;font-size:14px;color:#000;letter-spacing:-0.450px;font-weight:bold;">ФИО</div>
<div class="t" style="left:209.60px;top:226.00px;height:20px;line-height:20px;font-size:14px;color:#000;letter-spacing:0.359px;font-weight:bold;">Год рождения</div>
<div class="t" style="left:334.60px;top:226.00px;height:20px;line-height:20px;font-size:14px;color:#000;letter-spacing:-0.600px;font-weight:bold;">Пол</div>
<div class="t" style="left:382.00px;top:226.00px;height:20px;line-height:20px;font-size:14px;color:#000;letter-spacing:0.375px;font-weight:bold;">Сумма з/п, руб.</div>
<div class="t" style="left:557.00px;top:226.00px;height:20px;line-height:20px;font-size:14px;color:#000;letter-spacing:0.070px;font-weight:bold;">Премия</div>
<div class="t" style="left:69.01px;top:247.00px;height:20px;line-height:20px;font-size:14px;color:#000;letter-spacing:-0.600px;">1</div>
<div class="t" style="left:81.30px;top:247.00px;height:20px;line-height:20px;font-size:14px;color:#000;letter-spacing:0.483px;">Иванов И.И.</div>
<div class="t" style="left:244.76px;top:247.00px;height:20px;line-height:20px;font-size:14px;color:#000;letter-spacing:0.275px;">1968</div>
<div class="t" style="left:331.00px;top:247.00px;height:20px;line-height:20px;font-size:14px;color:#000;letter-spacing:0.586px;">муж.</div>
<div class="t" style="left:450.93px;top:247.00px;height:20px;line-height:20px;font-size:14px;color:#000;letter-spacing:0.185px;">34 758</div>
<div class="t" style="left:69.01px;top:268.00px;height:20px;line-height:20px;font-size:14px;color:#000;letter-spacing:-0.600px;">2</div>
<div class="t" style="left:81.30px;top:268.00px;height:20px;line-height:20px;font-size:14px;color:#000;letter-spacing:0.483px;">Петрова А.И.</div>
<div class="t" style="left:244.76px;top:268.00px;height:20px;line-height:20px;font-size:14px;color:#000;letter-spacing:0.275px;">1991</div>
<div class="t" style="left:331.75px;top:268.00px;height:20px;line-height:20px;font-size:14px;color:#000;letter-spacing:0.583px;">жен.</div>
<div class="t" style="left:450.93px;top:268.00px;height:20px;line-height:20px;font-size:14px;color:#000;letter-spacing:0.185px;">24 587</div>
<div class="t" style="left:69.01px;top:289.00px;height:20px;line-height:20px;font-size:14px;color:#000;letter-spacing:-0.600px;">3</div>
<div class="t" style="left:81.30px;top:289.00px;height:20px;line-height:20px;font-size:14px;color:#000;letter-spacing:0.490px;">Сидоров К.В.</div>
<div class="t" style="left:244.76px;top:289.00px;height:20px;line-height:20px;font-size:14px;color:#000;letter-spacing:0.275px;">1983</div>
<div class="t" style="left:331.00px;top:289.00px;height:20px;line-height:20px;font-size:14px;color:#000;letter-spacing:0.586px;">муж.</div>
<div class="t" style="left:450.93px;top:289.00px;height:20px;line-height:20px;font-size:14px;color:#000;letter-spacing:0.185px;">15 748</div>
<div class="t" style="left:69.01px;top:310.00px;height:20px;line-height:20px;font-size:14px;color:#000;letter-spacing:-0.600px;">4</div>
<div class="t" style="left:81.30px;top:310.00px;height:20px;line-height:20px;font-size:14px;color:#000;letter-spacing:0.504px;">Прицепин М.О.</div>
<div class="t" style="left:244.76px;top:310.00px;height:20px;line-height:20px;font-size:14px;color:#000;letter-spacing:0.275px;">1994</div>
<div class="t" style="left:331.00px;top:310.00px;height:20px;line-height:20px;font-size:14px;color:#000;letter-spacing:0.586px;">муж.</div>
<div class="t" style="left:450.93px;top:310.00px;height:20px;line-height:20px;font-size:14px;color:#000;letter-spacing:0.185px;">52 648</div>
<div class="t" style="left:69.01px;top:331.00px;height:20px;line-height:20px;font-size:14px;color:#000;letter-spacing:-0.600px;">5</div>
<div class="t" style="left:81.30px;top:331.00px;height:20px;line-height:20px;font-size:14px;color:#000;letter-spacing:0.465px;">Кузькина О.В.</div>
<div class="t" style="left:244.76px;top:331.00px;height:20px;line-height:20px;font-size:14px;color:#000;letter-spacing:0.275px;">1983</div>
<div class="t" style="left:331.75px;top:331.00px;height:20px;line-height:20px;font-size:14px;color:#000;letter-spacing:0.583px;">жен.</div>
<div class="t" style="left:450.93px;top:331.00px;height:20px;line-height:20px;font-size:14px;color:#000;letter-spacing:0.185px;">25 748</div>
<div class="t" style="left:69.01px;top:352.00px;height:20px;line-height:20px;font-size:14px;color:#000;letter-spacing:-0.600px;">6</div>
<div class="t" style="left:81.30px;top:352.00px;height:20px;line-height:20px;font-size:14px;color:#000;letter-spacing:0.498px;">Матвеев И.В.</div>
<div class="t" style="left:244.76px;top:352.00px;height:20px;line-height:20px;font-size:14px;color:#000;letter-spacing:0.275px;">1994</div>
<div class="t" style="left:331.00px;top:352.00px;height:20px;line-height:20px;font-size:14px;color:#000;letter-spacing:0.586px;">муж.</div>
<div class="t" style="left:450.93px;top:352.00px;height:20px;line-height:20px;font-size:14px;color:#000;letter-spacing:0.185px;">36 245</div>
<div class="abs" style="left:28px;top:223px;width:52px;height:24px;background:transparent;border:2px solid #217346"></div>
<div class="abs" style="left:30px;top:225px;width:48px;height:20px;background:transparent;border:1px solid #fff"></div>
<div class="abs" style="left:75px;top:242px;width:6px;height:6px;background:#fff;"></div>
<div class="abs" style="left:76px;top:243px;width:5px;height:5px;background:#217346;"></div>
<div class="abs" style="left:495px;top:218px;width:181px;height:161px;background:transparent;border:3px solid #fe0000;border-radius:10px"></div>
<div class="abs" style="left:1056px;top:204px;width:21px;height:462px;background:#e6e6e6;"></div>
<div class="abs" style="left:1059px;top:206px;width:15px;height:15px;background:#fff;border:1px solid #ababab"></div>
<svg class="abs" style="left:1063px;top:211px" width="8" height="4" viewBox="0 0 8 4"><path d="M0 4L4 0L8 4Z" fill="#777"/></svg>
<div class="abs" style="left:1059px;top:220px;width:15px;height:410px;background:#fff;border:1px solid #ababab"></div>
<div class="abs" style="left:1059px;top:630px;width:15px;height:22px;background:#d9d9d9;"></div>
<div class="abs" style="left:1059px;top:652px;width:15px;height:14px;background:#fff;border:1px solid #cfcfcf"></div>
<svg class="abs" style="left:1063px;top:658px" width="8" height="4" viewBox="0 0 8 4"><path d="M0 0L4 4L8 0Z" fill="#777"/></svg>

<div class="abs" style="left:1px;top:666px;width:1076px;height:28px;background:#e6e6e6;"></div>
<div class="abs" style="left:1px;top:694px;width:1076px;height:22px;background:#f3f3f3;"></div>
<div class="abs" style="left:1px;top:694px;width:1076px;height:1px;background:#d2d2d2;"></div>
<div class="abs" style="left:1px;top:666px;width:1055px;height:1px;background:#bdbdbd;"></div>
<svg class="abs" style="left:27px;top:675px" width="6" height="9" viewBox="0 0 6 9"><path d="M5.5 0.5L1 4.5L5.5 8.5Z" fill="#c3c3c3"/></svg>
<svg class="abs" style="left:56px;top:675px" width="6" height="9" viewBox="0 0 6 9"><path d="M0.5 0.5L5 4.5L0.5 8.5Z" fill="#c3c3c3"/></svg>
<div class="abs" style="left:101px;top:666px;width:108px;height:23px;background:#fff;"></div>
<div class="abs" style="left:101px;top:667px;width:1px;height:22px;background:#c6c6c6;"></div>
<div class="abs" style="left:208px;top:667px;width:1px;height:22px;background:#c6c6c6;"></div>
<div class="abs" style="left:101px;top:689px;width:108px;height:2px;background:#217346;"></div>
<div class="t" style="left:113.60px;top:670.00px;height:20px;line-height:20px;font-size:12.5px;color:#157a43;letter-spacing:0.096px;font-weight:bold;transform:scaleY(1.08);">microexcel.ru</div>
<div class="t" style="left:221.00px;top:670.00px;height:20px;line-height:20px;font-size:12px;color:#444;letter-spacing:0.188px;transform:scaleY(1.08);">Лист2</div>
<div class="abs" style="left:267px;top:670px;width:1px;height:20px;background:#ababab;"></div>
<svg class="abs" style="left:300px;top:671px" width="18" height="18" viewBox="0 0 18 18"><circle cx="9" cy="9" r="7.5" fill="none" stroke="#6a6a6a" stroke-width="1.1"/><path d="M9 5V13M5 9H13" stroke="#6a6a6a" stroke-width="1.6"/></svg>
<div class="abs" style="left:646px;top:675px;width:2px;height:2px;background:#b0b0b0;"></div>
<div class="abs" style="left:646px;top:679px;width:2px;height:2px;background:#b0b0b0;"></div>
<div class="abs" style="left:646px;top:683px;width:2px;height:2px;background:#b0b0b0;"></div>
<div class="abs" style="left:663px;top:673px;width:15px;height:15px;background:#fff;border:1px solid #b5b5b5"></div>
<svg class="abs" style="left:668px;top:677px" width="4" height="7" viewBox="0 0 4 7"><path d="M4 0L0 3.5L4 7Z" fill="#666"/></svg>
<div class="abs" style="left:678px;top:673px;width:330px;height:15px;background:#fff;border:1px solid #b5b5b5;border-left:0"></div>
<div class="abs" style="left:1008px;top:674px;width:33px;height:13px;background:#d8d8d8;"></div>
<div class="abs" style="left:1043px;top:673px;width:15px;height:15px;background:#fff;border:1px solid #b5b5b5"></div>
<svg class="abs" style="left:1049px;top:677px" width="4" height="7" viewBox="0 0 4 7"><path d="M0 0L4 3.5L0 7Z" fill="#666"/></svg>
<div class="t" style="left:9.40px;top:694.00px;height:20px;line-height:20px;font-size:11.5px;color:#3a3a3a;letter-spacing:0.020px;transform:scaleY(1.08);">Готово</div>
<svg class="abs" style="left:73px;top:698px" width="13" height="13" viewBox="0 0 13 13"><circle cx="3" cy="2.8" r="2.6" fill="#555"/><path d="M6.5 1.5H12.5V12.5H1.5V6.5" fill="none" stroke="#555" stroke-width="1"/><rect x="6.5" y="1.5" width="6" height="2" fill="#555"/><path d="M3.5 8H5M6.5 8H8M9.5 8H11M3.5 10.5H5M6.5 10.5H8M9.5 10.5H11M6.5 5.5H8M9.5 5.5H11" stroke="#555" stroke-width="1.2"/></svg>
<div class="abs" style="left:777px;top:695px;width:38px;height:21px;background:#c9c9c9;"></div>
<svg class="abs" style="left:789px;top:698px" width="14" height="13" viewBox="0 0 14 13"><path d="M0.5 0.5H13.5V12.5H0.5ZM0.5 4.5H13.5M0.5 8.5H13.5M5 0.5V12.5M9.5 0.5V12.5" fill="none" stroke="#555" stroke-width="1"/></svg>
<svg class="abs" style="left:827px;top:698px" width="15" height="13" viewBox="0 0 15 13"><path d="M0.5 0.5H14.5V12.5H0.5Z" fill="none" stroke="#555"/><path d="M4 2.5H11V10.5H4Z" fill="none" stroke="#555"/><path d="M5.5 4.5H9.5M5.5 6.5H9.5M5.5 8.5H9.5" stroke="#555"/></svg>
<svg class="abs" style="left:865px;top:698px" width="15" height="13" viewBox="0 0 15 13"><path d="M0.5 0.5H14.5V12.5H0.5Z" fill="none" stroke="#555"/><path d="M5 0.5V7.5H10.5V0.5" fill="none" stroke="#555"/><path d="M0.5 7.5H5M10.5 7.5H14.5" stroke="#555"/></svg>
<div class="abs" style="left:896px;top:704px;width:6px;height:2px;background:#444;"></div>
<div class="abs" style="left:906px;top:705px;width:100px;height:1px;background:#8a8a8a;"></div>
<div class="abs" style="left:954px;top:699px;width:5px;height:12px;background:#555;"></div>
<div class="abs" style="left:1009px;top:704px;width:7px;height:2px;background:#444;"></div>
<div class="abs" style="left:1011.5px;top:701.5px;width:2px;height:7px;background:#444;"></div>
<div class="t" style="left:1029.00px;top:694.50px;height:20px;line-height:20px;font-size:10.25px;color:#333;letter-spacing:-0.075px;transform:scaleY(1.08);">100 %</div>

<div class="abs" style="left:0;top:65px;width:1px;height:652px;background:#02753f"></div>
<div class="abs" style="left:1077px;top:65px;width:1px;height:652px;background:#02753f"></div>
<div class="abs" style="left:0;top:716px;width:1078px;height:1px;background:#02753f"></div>
</body></html>
